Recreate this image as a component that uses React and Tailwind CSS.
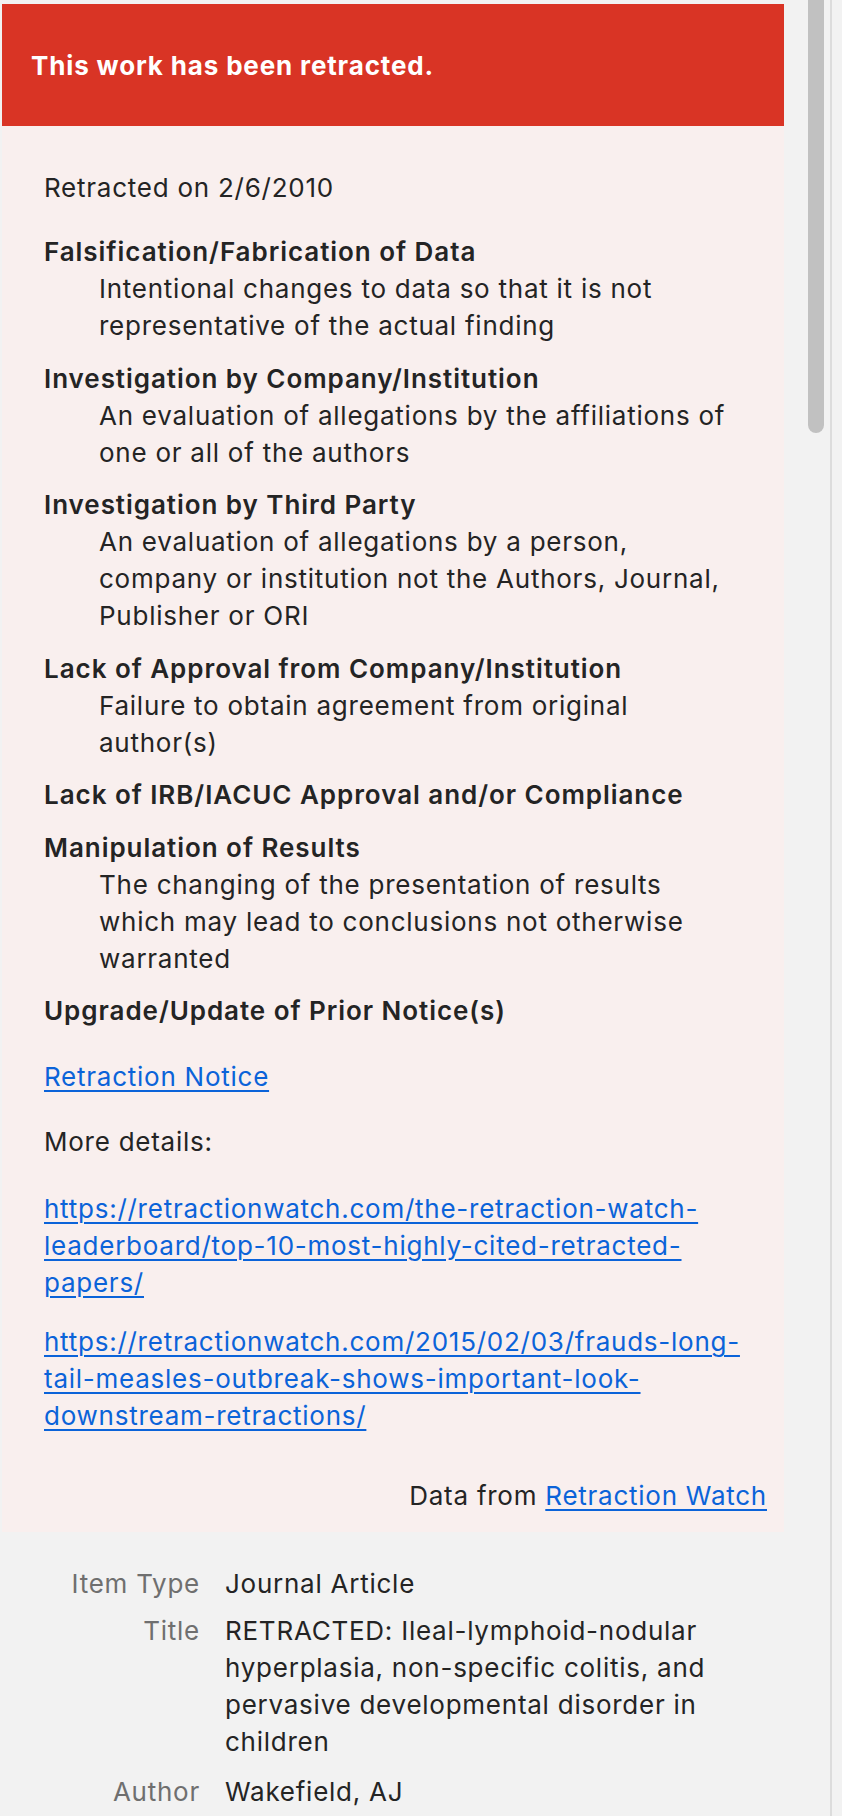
import React from 'react';

const reasons = [
  {
    title: 'Falsification/Fabrication of Data',
    text: 'Intentional changes to data so that it is not representative of the actual finding',
  },
  {
    title: 'Investigation by Company/Institution',
    text: 'An evaluation of allegations by the affiliations of one or all of the authors',
  },
  {
    title: 'Investigation by Third Party',
    text: 'An evaluation of allegations by a person, company or institution not the Authors, Journal, Publisher or ORI',
  },
  {
    title: 'Lack of Approval from Company/Institution',
    text: 'Failure to obtain agreement from original author(s)',
  },
  { title: 'Lack of IRB/IACUC Approval and/or Compliance' },
  {
    title: 'Manipulation of Results',
    text: 'The changing of the presentation of results which may lead to conclusions not otherwise warranted',
  },
  { title: 'Upgrade/Update of Prior Notice(s)' },
];

const fields = [
  { label: 'Item Type', value: 'Journal Article' },
  {
    label: 'Title',
    value:
      'RETRACTED: Ileal-lymphoid-nodular hyperplasia, non-specific colitis, and pervasive developmental disorder in children',
  },
  { label: 'Author', value: 'Wakefield, AJ' },
];

const linkCls =
  'text-[#0b63d9] underline decoration-[1.5px] underline-offset-[4px]';

export default function App() {
  return (
    <div className="w-[842px] h-[1816px] bg-[#f2f2f2] flex overflow-hidden font-['Inter',sans-serif] text-[26px] leading-[37px] tracking-[0.75px] text-[#242424]">
      <div className="w-[782px] ml-[2px] pt-[4px] shrink-0">
        {/* Retraction banner */}
        <div className="h-[122px] bg-[#d93425] flex items-center pl-[29px] pt-[1px] text-white font-bold tracking-[0.85px]">
          This work has been retracted.
        </div>

        <div className="bg-[#f9efee] pt-[43px] pl-[42px] pr-[17px] pb-[18px]">
          <p>Retracted on 2/6/2010</p>

          <dl className="mt-[27px] flex flex-col gap-[15.5px]">
            {reasons.map((r) => (
              <div key={r.title}>
                <dt className="font-semibold tracking-[0.95px]">{r.title}</dt>
                {r.text && <dd className="ml-[55px] max-w-[640px]">{r.text}</dd>}
              </div>
            ))}
          </dl>

          <p className="mt-[29px]">
            <a href="#" className={linkCls}>Retraction Notice</a>
          </p>
          <p className="mt-[28px]">More details:</p>
          <p className="mt-[29.5px] pr-[6px]">
            <a href="#" className={linkCls}>
              https://retractionwatch.com/the-retraction-watch-leaderboard/top-10-most-highly-cited-retracted-papers/
            </a>
          </p>
          <p className="mt-[22.5px] pr-[6px]">
            <a href="#" className={linkCls}>
              https://retractionwatch.com/2015/02/03/frauds-long-tail-measles-outbreak-shows-important-look-downstream-retractions/
            </a>
          </p>
          <p className="mt-[43px] text-right">
            Data from <a href="#" className={linkCls}>Retraction Watch</a>
          </p>
        </div>

        {/* Item fields */}
        <div className="mt-[33px] grid grid-cols-[198px_1fr] gap-x-[25px] gap-y-[10px]">
          {fields.map((f) => (
            <React.Fragment key={f.label}>
              <div className={'text-right text-[#6f6f6f]' + (f.label === 'Author' ? ' pt-[3px]' : '')}>{f.label}</div>
              <div className={'pr-[20px]' + (f.label === 'Author' ? ' pt-[3px]' : '')}>{f.value}</div>
            </React.Fragment>
          ))}
        </div>
      </div>

      {/* scrollbar */}
      <div className="ml-[24px] w-[16px] h-[433px] bg-[#c1c1c1] rounded-b-[8px] shrink-0" />
      <div className="ml-[6px] w-[2px] h-full bg-[#dcdcdc] shrink-0" />
    </div>
  );
}
